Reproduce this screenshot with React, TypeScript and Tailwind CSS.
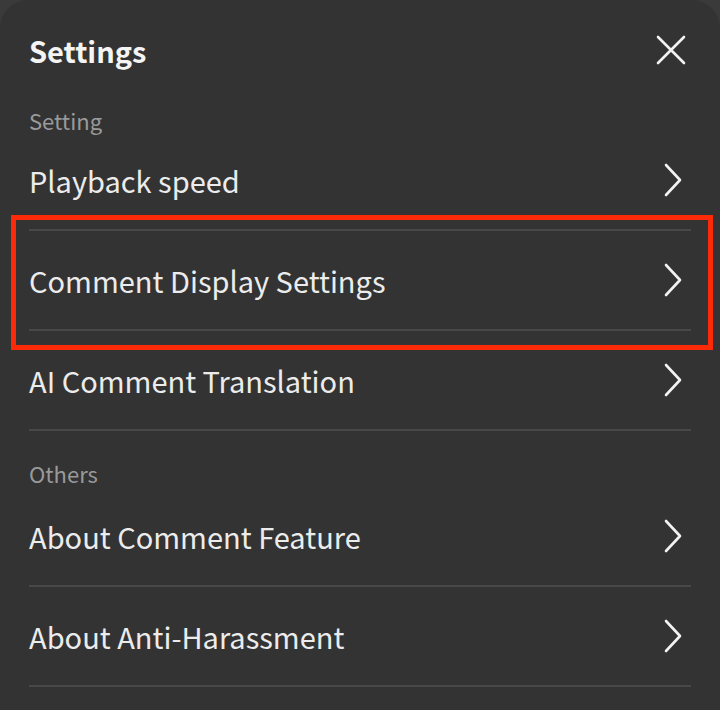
interface Item {
    label: string;
}

const settingItems: Item[] = [
    { label: "Playback speed" },
    { label: "Comment Display Settings" },
    { label: "AI Comment Translation" },
];

const otherItems: Item[] = [
    { label: "About Comment Feature" },
    { label: "About Anti-Harassment" },
];

const Chevron = () => (
    <svg width="18" height="34" viewBox="0 0 18 34" fill="none" className="mr-[9px] shrink-0">
        <path d="M2 2 L16 17 L2 32" stroke="#f2f2f2" strokeWidth="2.6" strokeLinecap="round" strokeLinejoin="round" />
    </svg>
);

const Row = ({ label }: Item) => (
    <div className="h-[100px] flex items-center justify-between border-b-2 border-[#484848] cursor-pointer">
        <span className="text-[29px] text-[#ececec] leading-none">{label}</span>
        <Chevron />
    </div>
);

const App = () => {
    return (
        <div className="h-[710px] w-[720px] bg-[#3a3a3a] overflow-hidden">
            <div
                className="relative h-full bg-[#333333] rounded-t-[28px] px-[29px]"
                style={{ fontFamily: '"Noto Sans CJK JP", "Noto Sans", sans-serif' }}
            >
                <div className="h-[100px] flex items-center justify-between">
                    <h1 className="text-[29px] font-bold text-[#f4f4f4] leading-none">Settings</h1>
                    <svg width="30" height="30" viewBox="0 0 30 30" className="mr-[5px]">
                        <path d="M2 2 L28 28 M28 2 L2 28" stroke="#f2f2f2" strokeWidth="2.6" strokeLinecap="round" />
                    </svg>
                </div>

                <div className="h-[31px] flex items-end">
                    <p className="text-[22px] text-[#9a9a9a] leading-none">Setting</p>
                </div>
                {settingItems.map((item) => (
                    <Row key={item.label} label={item.label} />
                ))}

                <div className="h-[56px] flex items-end pb-[3px]">
                    <p className="text-[22px] text-[#9a9a9a] leading-none">Others</p>
                </div>
                {otherItems.map((item) => (
                    <Row key={item.label} label={item.label} />
                ))}

                {/* highlight box */}
                <div className="absolute left-[11px] top-[215px] w-[702px] h-[135px] border-[5px] border-[#fb2a08] pointer-events-none" />
            </div>
        </div>
    );
};

export default App;
